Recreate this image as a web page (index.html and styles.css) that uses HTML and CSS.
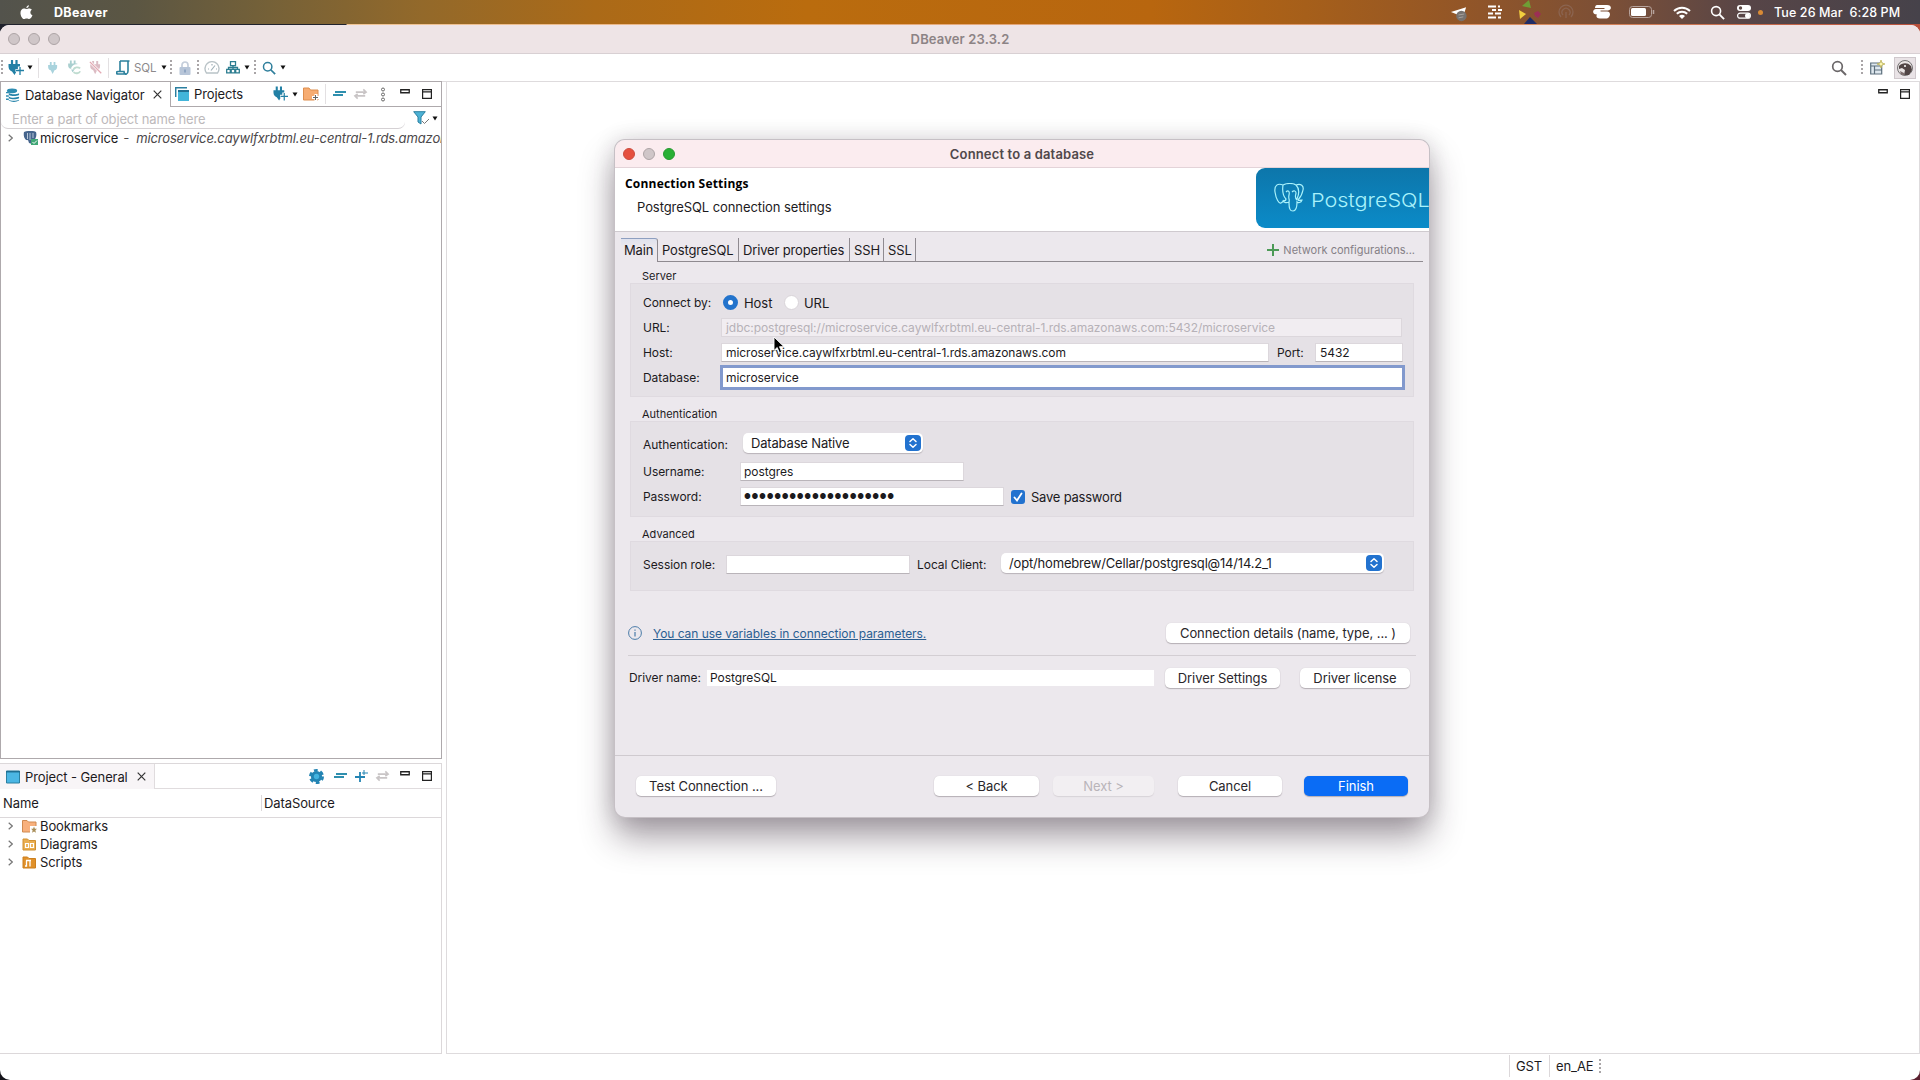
FILE: index.html
```html
<!DOCTYPE html>
<html lang="en">
<head>
    <meta charset="UTF-8" />
    <meta name="viewport" content="width=device-width, initial-scale=1" />
    <title>DBeaver 23.3.2</title>
    <link rel="stylesheet" href="styles.css">
</head>
<body>

<!-- shared icons -->
<svg class="defs" aria-hidden="true">
    <symbol id="plug" viewBox="0 0 16 16">
        <path d="M5 0v5M10 0v5" stroke="currentColor" stroke-width="2.400" fill="none"/>
        <path d="M1.500 4h12v2.500c0 2.500-1.500 4-3.500 4.500L7.500 16 5 11C3 10.500 1.500 9 1.500 6.500z" fill="currentColor"/>
    </symbol>
    <symbol id="plug-add" viewBox="0 0 16 16">
        <path d="M4 0v5M8.500 0v5" stroke="currentColor" stroke-width="2.200" fill="none"/>
        <path d="M.5 4h11.500v2.500c0 2.500-1.500 4.500-3.500 5L6.500 15 4 11.500C2 11 .5 9 .5 6.500z" fill="currentColor"/>
        <path d="M7.500 10.500h8.500M11.500 6.500v9" stroke="#fff" stroke-width="3.200"/>
        <path d="M8 10.500h8M12 7v8" stroke="currentColor" stroke-width="1.300"/>
    </symbol>
    <symbol id="caret" viewBox="0 0 6 5"><path d="M.5.500h5L3 4.500z" fill="#111"/></symbol>
    <symbol id="minus" viewBox="0 0 14 8">
        <path d="M3 2h11M1 5h10" stroke="#2f8fae" stroke-width="1.800"/>
    </symbol>
    <symbol id="sync" viewBox="0 0 16 12">
        <path d="M3 4h11M11 1l3 3-3 2M13 8H2M5 6L2 8l3 3" stroke="#c9c5c6" stroke-width="1.700" fill="none"/>
    </symbol>
    <symbol id="min" viewBox="0 0 10 5"><path d="M.75.75h8.500v3h-8.500z" fill="none" stroke="#222" stroke-width="1.300"/></symbol>
    <symbol id="max" viewBox="0 0 10 10"><path d="M.6.6h8.800v8.800H.6zM.6 2.800h8.800" fill="none" stroke="#222" stroke-width="1.200"/></symbol>
    <symbol id="close" viewBox="0 0 9 9"><path d="M.7.700l7.600 7.600M8.300.7L.7 8.300" stroke="#333" stroke-width="1.200"/></symbol>
    <symbol id="chev" viewBox="0 0 5 8"><path d="M.7.700L4.300 4 .7 7.300" fill="none" stroke="#777" stroke-width="1.200"/></symbol>
    <symbol id="updown" viewBox="0 0 16 16">
        <rect width="16" height="16" rx="4" fill="#2272cf"/>
        <path d="M5 6.500L8 3.700l3 2.800M5 9.500l3 2.800 3-2.800" fill="none" stroke="#fff" stroke-width="1.500" stroke-linecap="round" stroke-linejoin="round"/>
    </symbol>
    <symbol id="lens" viewBox="0 0 16 16">
        <circle cx="6.500" cy="6.500" r="4.800" fill="none" stroke="currentColor" stroke-width="1.700"/>
        <path d="M10 10l5 5" stroke="currentColor" stroke-width="2"/>
    </symbol>
</svg>

<!-- macOS menu bar -->
<header class="menubar">
    <svg class="apple" viewBox="0 0 14 16"><path d="M9.600.3c.1 1.500-1.300 3-2.700 3C6.700 1.800 8.200.4 9.600.3zM7.100 4.300c.7 0 1.500-.7 2.900-.7 1.200 0 2.200.6 2.800 1.500-2.400 1.500-2 4.900.6 5.900-.6 1.700-1.900 4-3.400 4-1.100 0-1.500-.6-2.800-.6S5.300 15 4.300 15C2.400 15 .5 11.500.5 8.500c0-3 1.800-4.800 3.800-4.800 1.300 0 2.100.6 2.800.6z" fill="#fff"/></svg>
    <b class="app-name">DBeaver</b>
    <div class="menu-icons">
        <svg class="mi-plane" viewBox="0 0 20 16"><path d="M1 6L17 1l-3 9-5-1z" fill="#fff"/><circle cx="12" cy="10" r="5.500" fill="#77726f"/><path d="M9 9l6-1M9 12l5-1" stroke="#a9a39f" /></svg>
        <svg class="mi-lines" viewBox="0 0 14 14"><path d="M0 1.500h8M4 5h4M10 5h4M0 8.500h5M7 8.500h6M0 12.500h8M10 1.500h2M10 12.500h3" stroke="#fff" stroke-width="2"/></svg>
        <svg class="mi-color" viewBox="0 0 22 24"><path d="M3 6L10 0l2 8z" fill="#6f9e35"/><path d="M0 10l7 4-6 5z" fill="#f3cf3e"/><path d="M5 24l6-7 7 7z" fill="#1f2c66"/><path d="M15 13l4-2 3 3-3 4-3-2z" fill="#9c2f55"/></svg>
        <svg class="mi-dim" viewBox="0 0 16 16"><path d="M3 13a7 7 0 1 1 10 0M5 11a4 4 0 1 1 6 0M8 8v6" fill="none" stroke="#8b6450" stroke-width="1.300"/></svg>
        <svg class="mi-swirl" viewBox="0 0 18 14"><path d="M4 0h10c5 0 5 5 1 5.500H8c-1 0-1 1 0 1h6c5 0 3 7-1 7H7c-4 0-4-3-3-4-5 0-5-5-1-5.500h8c1 0 1-1 0-1H2C2 1 3 0 4 0z" fill="#fff"/></svg>
        <svg class="mi-battery" viewBox="0 0 26 12"><rect x=".5" y=".5" width="22" height="11" rx="3" fill="none" stroke="#b7a39c"/><rect x="2" y="2" width="15" height="8" rx="1.500" fill="#fff"/><path d="M24.500 4v4" stroke="#b7a39c" stroke-width="1.500"/></svg>
        <svg class="mi-wifi" viewBox="0 0 18 13"><path d="M1 5a11.500 11.500 0 0 1 16 0M3.800 7.800a7.500 7.500 0 0 1 10.400 0" fill="none" stroke="#fff" stroke-width="2"/><path d="M6 10a4.500 4.500 0 0 1 6 0l-3 3z" fill="#fff"/></svg>
        <svg class="mi-search"><use href="#lens"/></svg>
        <svg class="mi-control" viewBox="0 0 14 14"><rect width="14" height="6" rx="3" fill="#fff"/><circle cx="3.500" cy="3" r="1.700" fill="#5c4844"/><rect x=".6" y="8.200" width="12.800" height="5" rx="2.500" fill="none" stroke="#fff" stroke-width="1.200"/><circle cx="10.500" cy="10.700" r="2.500" fill="#fff"/></svg>
        <i class="mi-dot"></i>
    </div>
    <span class="clock">Tue 26 Mar&nbsp; 6:28 PM</span>
</header>

<div class="window">
    <div class="titlebar">
        <div class="lights"><i></i><i></i><i></i></div>
        <b class="win-title">DBeaver 23.3.2</b>
    </div>

    <div class="toolbar">
        <i class="grip"></i>
        <svg class="tb-new"><use href="#plug-add"/></svg>
        <svg class="caret"><use href="#caret"/></svg>
        <i class="bar"></i>
        <svg class="tb-connect"><use href="#plug"/></svg>
        <svg class="tb-reconnect" viewBox="0 0 16 16"><use href="#plug" width="13" height="14"/><path d="M6.500 10a4 3 0 0 1 8-1M14.500 12a4 3 0 0 1-8 1" stroke="#fff" stroke-width="4" fill="none"/><path d="M7 10a4 3 0 0 1 7-1M14 12a4 3 0 0 1-7 1" stroke="#bfdcd0" stroke-width="2" fill="none"/></svg>
        <svg class="tb-disconnect" viewBox="0 0 16 16"><use href="#plug" width="15" height="15"/><path d="M1 1l13 13" stroke="#fff" stroke-width="3"/><path d="M1 1l13 13" stroke="#e3a9b3" stroke-width="1.500"/></svg>
        <i class="bar"></i>
        <svg class="tb-script" viewBox="0 0 14 15"><path d="M4 1h9.500M4 1v10.500M12 1v10c0 4-3 3-3 3H2c-2 0-2-2.500 0-2.500h6c0 2.500 1 2.500 2 2.500" fill="none" stroke="#2c819d" stroke-width="1.600"/></svg>
        <span class="sql">SQL</span>
        <svg class="caret"><use href="#caret"/></svg>
        <i class="grip grip-sql"></i>
        <svg class="tb-lock" viewBox="0 0 12 14"><path d="M3 7V4a3 3 0 0 1 6 0v3" fill="none" stroke="#c5cedb" stroke-width="1.700"/><rect x=".5" y="6" width="11" height="8" rx="1" fill="#b7c5d8"/><path d="M6 8.500v3" stroke="#8fa5c2" stroke-width="2"/></svg>
        <i class="grip grip-lock"></i>
        <svg class="tb-gauge" viewBox="0 0 16 13"><path d="M2.500 12a7 7 0 1 1 11 0z" fill="none" stroke="#b9c3c7" stroke-width="1.400"/><path d="M7 9.500l4-5M4 8h1M8 3v1.500M12 8h1" stroke="#9fb0b8" stroke-width="1.200"/></svg>
        <svg class="tb-dash" viewBox="0 0 14 13"><path d="M4.500.7h5v4h-5zM7 4.700v3M2.500 8V6.500h9V8M.7 8.300h3.600v3.500H.7zM5.200 8.300h3.600v3.500H5.200zM9.700 8.300h3.600v3.500H9.700z" fill="none" stroke="#2c7d90" stroke-width="1.300"/></svg>
        <svg class="caret"><use href="#caret"/></svg>
        <i class="grip grip-find"></i>
        <svg class="tb-find"><use href="#lens"/></svg>
        <svg class="caret"><use href="#caret"/></svg>

        <div class="tb-right">
            <svg class="tb-search"><use href="#lens"/></svg>
            <i class="grip"></i>
            <svg class="tb-persp" viewBox="0 0 15 15"><path d="M.7 3h11v11H.7zM.7 6h11M4.500 6v8M4.500 10h7" fill="#dfe8ef" stroke="#5d6f7d" stroke-width="1.200"/><path d="M11 0l1 3 3 1-3 1-1 3-1-3-3-1 3-1z" fill="#fbf6b0" stroke="#b6a94b" stroke-width=".7"/></svg>
            <span class="persp-on"><svg viewBox="0 0 16 16"><circle cx="8" cy="8" r="7.500" fill="#e9e4e4" stroke="#555" stroke-width=".8"/><path d="M2 6c3-3 8-4 12 0l1 4-3 5H7l1-5-3-2-3 1z" fill="#514545"/><path d="M3 11l4 2 1 2.500-4-1z" fill="#7b6c6c"/><circle cx="8" cy="6" r="1" fill="#fff"/></svg></span>
        </div>
    </div>

    <main class="workbench">
        <div class="side">
            <section class="navigator">
                <div class="tabs">
                    <div class="tab nav-tab">
                        <svg class="tab-icon" viewBox="0 0 15 15"><ellipse cx="6.500" cy="3" rx="5.500" ry="2.500" fill="#2f8db2"/><path d="M0 5h3M0 8.500h3M0 12h3" stroke="#2f8db2" stroke-width="1.500"/><path d="M3 5c2 2 8 2 11 .5v2C11 9 6 9 3 7.500zM3 9c2 2 8 1.500 11 .5v1.500c-3 1.500-8 1.500-11 0zM3 12.500c2 1.500 8 1.500 11 0v1c-3 2-8 2-11 0z" fill="#2583aa"/></svg>
                        <span>Database Navigator</span>
                        <svg class="x"><use href="#close"/></svg>
                    </div>
                    <div class="tab-rest">
                        <svg class="tab-icon" viewBox="0 0 14 14"><path d="M.7 10V.7H12" fill="none" stroke="#2b7fa0" stroke-width="1.500"/><path d="M3 3.500h11V14H3z" fill="#43b5da"/><path d="M3 4h11" stroke="#226f92" stroke-width="2"/></svg>
                        <span class="projects">Projects</span>
                        <div class="tools">
                            <svg class="t-plug"><use href="#plug-add"/></svg>
                            <svg class="caret"><use href="#caret"/></svg>
                            <svg class="t-folder" viewBox="0 0 17 14"><path d="M.5 13V1H6l1.500 2H15v10z" fill="#f6ac72" stroke="#dd8e4e"/><path d="M9 10.500h8M13 7v7" stroke="#fff" stroke-width="3"/><path d="M10 10.500h5M12.500 8v5" stroke="#666"/></svg>
                            <i class="bar"></i>
                            <svg class="t-minus"><use href="#minus"/></svg>
                            <svg class="t-sync"><use href="#sync"/></svg>
                            <svg class="t-dots" viewBox="0 0 6 15"><g fill="none" stroke="#666"><circle cx="3" cy="2.500" r="1.500"/><circle cx="3" cy="7.500" r="1.500"/><circle cx="3" cy="12.500" r="1.500"/></g></svg>
                            <svg class="t-min"><use href="#min"/></svg>
                            <svg class="t-max"><use href="#max"/></svg>
                        </div>
                    </div>
                </div>
                <div class="filter">
                    <div class="filter-input">Enter a part of object name here</div>
                    <svg class="funnel" viewBox="0 0 16 14"><path d="M.7.700h11.600L8 6v7L5 11V6z" fill="#4db2d5" stroke="#2b7fa0"/><path d="M9 10l2.500 2.500L16 8" fill="none" stroke="#777"/></svg>
                    <svg class="caret"><use href="#caret"/></svg>
                </div>
                <div class="tree-row conn">
                    <svg class="chev"><use href="#chev"/></svg>
                    <svg class="pg" viewBox="0 0 15 15"><path d="M1 1c4-1.500 9-1.500 12 0 1 3 0 7-2 8l-2 4-3-1-1-3C2 10 0 5 1 1z" fill="#46658d"/><path d="M4.500 2v6M7 2v7M10 2v5" stroke="#b9c8d8"/><path d="M8 8h7v6H8z" fill="#41a777"/><path d="M9.500 11l1.500 1.500 3-3" stroke="#fff" fill="none"/></svg>
                    <span class="conn-name">microservice</span>
                    <em>- &nbsp;microservice.caywlfxrbtml.eu-central-1.rds.amazon</em>
                </div>
            </section>

            <section class="project">
                <div class="tabs">
                    <div class="tab proj-tab">
                        <svg class="tab-icon" viewBox="0 0 14 13"><path d="M.5.500h13v12H.5z" fill="#4bb6e4" stroke="#2b7fa0"/><path d="M0 1.200h14" stroke="#1f6e92" stroke-width="1.500"/></svg>
                        <span>Project - General</span>
                        <svg class="x"><use href="#close"/></svg>
                    </div>
                    <div class="tab-rest">
                        <div class="tools">
                            <svg class="t-gear" viewBox="0 0 14 14"><circle cx="7" cy="7" r="5.800" fill="none" stroke="#2384b3" stroke-width="2.400" stroke-dasharray="3.500 2.570"/><circle cx="7" cy="7" r="5.200" fill="#2384b3"/><circle cx="7" cy="7" r="2.500" fill="#43b3df"/></svg>
                            <svg class="t-minus"><use href="#minus"/></svg>
                            <svg class="t-plus" viewBox="0 0 13 12"><path d="M0 7h10M5 2v10" stroke="#2384b3" stroke-width="1.800"/><path d="M7 3h6M9 0v5" stroke="#2384b3"/></svg>
                            <svg class="t-sync"><use href="#sync"/></svg>
                            <svg class="t-min"><use href="#min"/></svg>
                            <svg class="t-max"><use href="#max"/></svg>
                        </div>
                    </div>
                </div>
                <div class="cols"><span class="col-name">Name</span><span class="col-source">DataSource</span></div>
                <div class="tree-row">
                    <svg class="chev"><use href="#chev"/></svg>
                    <svg class="folder" viewBox="0 0 15 13"><path d="M.5 12V.5H5L6.500 2H14v10z" fill="#f8b07c" stroke="#d08a50"/><path d="M8 6h7v7H8z" fill="#fff"/><path d="M12 6.500l.9 2.200 2.100.1-1.600 1.500.5 2.400-1.900-1.200-1.900 1.200.5-2.400L9 8.800l2.100-.1z" fill="#a88d58"/></svg>
                    <span>Bookmarks</span>
                </div>
                <div class="tree-row">
                    <svg class="chev"><use href="#chev"/></svg>
                    <svg class="folder" viewBox="0 0 15 13"><path d="M1 12V1h4.500L7 2.500h6.500V12z" fill="#e9ae50" stroke="#d09031"/><path d="M3.500 5.500h3v4h-3zM8.500 5.500h3v4h-3z" fill="none" stroke="#fff" stroke-width="1.200"/></svg>
                    <span>Diagrams</span>
                </div>
                <div class="tree-row">
                    <svg class="chev"><use href="#chev"/></svg>
                    <svg class="folder" viewBox="0 0 15 13"><path d="M1 12V1h4.500L7 2.500h6.500V12z" fill="#e0912b" stroke="#cc7f1d"/><path d="M4 4.500h5M4.500 4.500v5.500H3M8 4.500v6" fill="none" stroke="#fff" stroke-width="1.300"/></svg>
                    <span>Scripts</span>
                </div>
            </section>
        </div>

        <section class="editor">
            <svg class="t-min"><use href="#min"/></svg>
            <svg class="t-max"><use href="#max"/></svg>
        </section>
    </main>

    <footer class="status">
        <span class="tz">GST</span>
        <span class="locale">en_AE</span>
        <i class="grip"></i>
    </footer>
</div>

<!-- connection dialog -->
<div class="dialog">
    <div class="dlg-title">
        <div class="lights"><i class="red"></i><i></i><i class="green"></i></div>
        <b>Connect to a database</b>
    </div>

    <div class="dlg-head">
        <div class="head-text">
            <h1>Connection Settings</h1>
            <p>PostgreSQL connection settings</p>
        </div>
        <div class="banner">
            <svg class="elephant" viewBox="0 0 30 30"><path d="M9 2C4 0 0 2 1 9c1 7 4 12 6 11 2-1 3-3 3-3M9 2c4-2 10-2 13 0 5-2 8 1 7 5-1 5-3 8-5 10 1 1 3 0 4 0-1 3-4 3-5 2 0 5-1 9-4 9s-4-2-4-9c-2 1-5 1-6-1 2 0 3-1 3-2-3-3-4-7-3-14zM22 2c3 3 4 7 1 14M12 9c2-2 4-1 3 3s1 4 0 7M18 9c2-2 4-1 4 1s-2 4 1 7" fill="none" stroke="#a9f2fb" stroke-width="1.200"/></svg>
            <span>PostgreSQL</span>
        </div>
    </div>

    <div class="dlg-tabs">
        <span class="dt on">Main</span>
        <span class="dt w-pg">PostgreSQL</span>
        <span class="dt w-dp">Driver properties</span>
        <span class="dt w-ssh">SSH</span>
        <span class="dt w-ssl">SSL</span>
        <span class="net"><svg viewBox="0 0 12 12"><path d="M0 6h12M6 0v12" stroke="#4c9a57" stroke-width="2"/></svg><span>Network configurations...</span></span>
    </div>

    <div class="dlg-body">
        <h2>Server</h2>
        <div class="group server">
            <div class="row">
                <label>Connect by:</label>
                <i class="radio on"></i><span class="r-host">Host</span>
                <i class="radio"></i><span class="r-url">URL</span>
            </div>
            <div class="row">
                <label>URL:</label>
                <div class="input disabled">jdbc:postgresql://microservice.caywlfxrbtml.eu-central-1.rds.amazonaws.com:5432/microservice</div>
            </div>
            <div class="row">
                <label>Host:</label>
                <div class="input host">microservice.caywlfxrbtml.eu-central-1.rds.amazonaws.com</div>
                <label class="port-label">Port:</label>
                <div class="input port">5432</div>
            </div>
            <div class="row">
                <label>Database:</label>
                <div class="input focus">microservice</div>
            </div>
        </div>

        <h2>Authentication</h2>
        <div class="group auth">
            <div class="row auth-row">
                <label>Authentication:</label>
                <div class="select native">Database Native<svg><use href="#updown"/></svg></div>
            </div>
            <div class="row">
                <label>Username:</label>
                <div class="input user">postgres</div>
            </div>
            <div class="row">
                <label>Password:</label>
                <div class="input pass">●●●●●●●●●●●●●●●●●●●●</div>
                <svg class="check" viewBox="0 0 14 14"><rect width="14" height="14" rx="3" fill="#2272cf"/><path d="M3.500 7.500l2.500 3 4.500-7" fill="none" stroke="#fff" stroke-width="1.800" stroke-linecap="round"/></svg>
                <span class="save">Save password</span>
            </div>
        </div>

        <h2>Advanced</h2>
        <div class="group adv">
            <div class="row">
                <label>Session role:</label>
                <div class="input role"></div>
                <label class="client-label">Local Client:</label>
                <div class="select client">/opt/homebrew/Cellar/postgresql@14/14.2_1<svg><use href="#updown"/></svg></div>
            </div>
        </div>

        <div class="hint">
            <svg viewBox="0 0 14 14"><circle cx="7" cy="7" r="6.400" fill="none" stroke="#4a7ba8"/><path d="M7 6v4.500M7 3.500v1.300" stroke="#4a7ba8" stroke-width="1.200"/></svg>
            <a>You can use variables in connection parameters.</a>
            <button class="b-details">Connection details (name, type, ... )</button>
        </div>
        <div class="driver">
            <label>Driver name:</label>
            <div class="driver-name">PostgreSQL</div>
            <button class="b-settings">Driver Settings</button>
            <button class="b-license">Driver license</button>
        </div>
    </div>

    <div class="dlg-foot">
        <button class="b-test">Test Connection ...</button>
        <button class="b-back">&lt; Back</button>
        <button class="b-next" disabled>Next &gt;</button>
        <button class="b-cancel">Cancel</button>
        <button class="b-finish">Finish</button>
    </div>
</div>

<svg class="cursor" viewBox="0 0 12 18"><path d="M1 1v13.500l3.200-3 2.300 5.500 2.300-1-2.300-5.300H11z" fill="#000" stroke="#fff" stroke-width=".9"/></svg>

</body>
</html>
```
FILE: styles.css
```css
* {
    box-sizing: border-box;
}
body {
    margin: 0;
    width: 1920px;
    height: 1080px;
    overflow: hidden;
    position: relative;
    background:
        linear-gradient(90deg, #14131a 50%, #5c2030 50%) 0 100% / 100% 500px no-repeat,
        linear-gradient(90deg, #20222c 0%, #20222c 18%, #f0c596 18.100%, #d98d60 80%, #b8503c 100%);
    font-family: Inter, "Liberation Sans", sans-serif;
    font-size: 13px;
    letter-spacing: -.1px;
    color: #1c1a1d;
    display: flex;
    flex-direction: column;
}
svg {
    display: block;
    flex: none;
}
h1, h2, p {
    margin: 0;
}
span, label, b, em, a {
    white-space: nowrap;
}
.defs {
    position: absolute;
    width: 0;
    height: 0;
}

/* menu bar */
.menubar {
    height: 24px;
    flex: none;
    display: flex;
    align-items: center;
    color: #fff;
    background: linear-gradient(90deg, #53534c 0%, #5b5643 7%, #756138 14%, #93692a 22%, #ab6a18 31%, #ba6c0e 42%, #b8660f 60%, #a65f1a 68%, #935627 76%, #7b4f37 84%, #574547 91%, #46424a 100%);
}
.apple {
    width: 13px;
    height: 15px;
    margin-left: 20px;
}
.app-name {
    margin-left: 21px;
    font-size: 12.500px;
    letter-spacing: .3px;
}
.menu-icons {
    margin-left: auto;
    display: flex;
    align-items: center;
}
.mi-plane { width: 19px; height: 16px; margin-top: 4px; }
.mi-lines { width: 14px; height: 14px; margin-left: 19px; }
.mi-color { width: 22px; height: 24px; margin-left: 17px; }
.mi-dim { width: 16px; height: 16px; margin-left: 17px; }
.mi-swirl { width: 18px; height: 14px; margin-left: 19px; }
.mi-battery { width: 26px; height: 12px; margin-left: 18px; }
.mi-wifi { width: 18px; height: 13px; margin-left: 18px; }
.mi-search { width: 15px; height: 15px; margin-left: 19px; }
.mi-control { width: 14px; height: 14px; margin-left: 12px; }
.mi-dot {
    width: 5px;
    height: 5px;
    margin-left: 7px;
    border-radius: 50%;
    background: #d98a35;
}
.clock {
    margin: 0 19px 0 11px;
    width: 127px;
    font-size: 12.500px;
    font-weight: 500;
    letter-spacing: .1px;
}

/* main window */
.window {
    flex: 1;
    margin-top: 1px;
    display: flex;
    flex-direction: column;
    border-radius: 9px 9px 10px 10px;
    overflow: hidden;
    background: #fff;
}
.titlebar {
    position: relative;
    height: 29px;
    flex: none;
    display: flex;
    align-items: center;
    justify-content: center;
    background: #eee4e6;
    border-bottom: 1px solid #d8d0d3;
}
.lights {
    position: absolute;
    left: 8px;
    display: flex;
    gap: 8px;
}
.lights i {
    width: 12px;
    height: 12px;
    border-radius: 50%;
    background: #cfc6c8;
    border: 1px solid #ada4a6;
}
.lights .red {
    background: #e5503f;
    border-color: #cb4c3f;
}
.lights .green {
    background: #29b035;
    border-color: #279a31;
}
.win-title {
    padding-bottom: 1px;
    color: #8c8385;
    font-size: 13px;
    font-weight: 600;
    letter-spacing: .15px;
}
.toolbar {
    height: 28px;
    flex: none;
    display: flex;
    align-items: center;
    padding-left: 1px;
    border-bottom: 1px solid #dedbdd;
}
.grip {
    width: 2px;
    height: 15px;
    flex: none;
    background: repeating-linear-gradient(#a9a5a7 0 2px, #fff 2px 4px);
}
.bar {
    width: 1px;
    height: 20px;
    flex: none;
    background: #e3e0e2;
}
.caret {
    width: 6px;
    height: 5px;
}
.tb-new { width: 16px; height: 16px; margin: 0 3px 0 5px; color: #2280a5; }
.toolbar > .bar { margin-left: 5px; }
.tb-connect { width: 12px; height: 14px; margin-left: 8px; color: #a9d3dd; }
.tb-reconnect { width: 15px; height: 15px; margin-left: 8px; color: #a9cfcf; }
.tb-disconnect { width: 14px; height: 14px; margin-left: 7px; color: #dcbcc4; }
.tb-script { width: 14px; height: 15px; margin-left: 7px; }
.sql { width: 21px; margin: 0 6px 0 4px; font-size: 11.500px; color: #8c898b; }
.grip-sql { margin-left: 3px; }
.tb-lock { width: 12px; height: 14px; margin-left: 7px; }
.grip-lock { margin-left: 6px; }
.tb-gauge { width: 16px; height: 13px; margin-left: 5px; }
.tb-dash { width: 14px; height: 13px; margin: 0 4px 0 6px; }
.grip-find { margin-left: 4px; }
.tb-find { width: 14px; height: 14px; margin: 0 4px 0 6px; color: #2f7f9c; }
.tb-right {
    margin-left: auto;
    display: flex;
    align-items: center;
    padding-right: 4px;
}
.tb-search { width: 16px; height: 16px; margin-right: 14px; color: #6b6769; }
.tb-persp { width: 15px; height: 15px; margin: 0 9px 0 7px; }
.persp-on {
    width: 22px;
    height: 22px;
    padding: 2px;
    background: #e9e3e6;
    border: 1px solid #cfc8cc;
}
.persp-on svg { width: 16px; height: 16px; }

/* workbench */
.workbench {
    flex: 1;
    display: flex;
    min-height: 0;
}
.side {
    width: 442px;
    flex: none;
    display: flex;
    flex-direction: column;
}
.navigator {
    height: 678px;
    margin-top: -1px;
    border: 1px solid #aea9ac;
}
.tabs {
    display: flex;
    height: 25px;
}
.tab, .tab-rest {
    display: flex;
    align-items: center;
}
.tab {
    padding-left: 5px;
}
.tab-icon {
    width: 14px;
    height: 14px;
    margin-right: 5px;
}
.x {
    width: 9px;
    height: 9px;
    margin-left: auto;
}
.nav-tab {
    width: 170px;
    padding-right: 8px;
    border-right: 1px solid #aea9ac;
}
.tab-rest {
    flex: 1;
    padding-left: 4px;
    border-bottom: 1px solid #aea9ac;
}
.tools {
    margin-left: auto;
    display: flex;
    align-items: center;
    padding-right: 9px;
}
.t-plug { width: 15px; height: 16px; margin-right: 4px; color: #2280a5; }
.t-folder { width: 17px; height: 14px; margin: 0 5px; }
.t-minus { width: 14px; height: 8px; margin-left: 6px; }
.t-sync { width: 15px; height: 12px; margin-left: 7px; }
.t-dots { width: 6px; height: 15px; margin-left: 12px; }
.t-min { width: 10px; height: 5px; margin: 0 12px 5px 14px; }
.t-max { width: 10px; height: 10px; }
.t-gear { width: 15px; height: 15px; margin-right: 3px; }
.t-plus { width: 13px; height: 12px; margin-left: 8px; }
.filter {
    display: flex;
    align-items: center;
    height: 22px;
}
.filter-input {
    width: 404px;
    height: 21px;
    padding-left: 11px;
    line-height: 22px;
    color: #bdb9bb;
    border-bottom: 1px solid #d5d1d4;
    border-radius: 0 0 7px 7px;
    letter-spacing: -.15px;
}
.funnel { width: 16px; height: 14px; margin: 0 3px 0 8px; }
.tree-row {
    display: flex;
    align-items: center;
    height: 18px;
    padding-left: 8px;
    overflow: hidden;
}
.conn {
    padding-left: 7px;
}
.chev { width: 5px; height: 8px; margin-right: 10px; }
.pg { width: 15px; height: 15px; margin-right: 2px; }
.conn em {
    margin-left: 5px;
    color: #4b484a;
    letter-spacing: -.14px;
}
.project {
    margin-top: 4px;
    flex: 1;
    border: 1px solid #dcd8da;
    border-left: 0;
}
.proj-tab {
    width: 155px;
    padding: 0 8px 0 6px;
    background: #f8f5f7;
    border-right: 1px solid #e0dcde;
}
.project .tab-rest {
    border-color: #e0dcde;
}
.project .t-sync { margin-left: 7px; }
.project .t-min { margin-left: 10px; }
.cols {
    display: flex;
    align-items: center;
    height: 29px;
    margin-bottom: -1px;
    border-bottom: 1px solid #dcd8da;
}
.col-name {
    width: 261px;
    padding-left: 3px;
}
.col-source {
    padding-left: 2px;
    border-left: 1px solid #dcd8da;
}
.folder { width: 15px; height: 13px; margin: 0 3px 0 -1px; }
.editor {
    flex: 1;
    margin-left: 4px;
    padding: 7px 9px 0 0;
    display: flex;
    justify-content: flex-end;
    border: 1px solid #dedbdd;
    border-top: 0;
}
.status {
    height: 26px;
    flex: none;
    display: flex;
    align-items: center;
    padding: 0 0 2px 1509px;
}
.tz, .locale {
    border-left: 1px solid #dcd8da;
    padding: 3px 7px 3px 6px;
}
.tz { width: 40px; }
.locale { width: 50px; }

/* dialog */
.dialog {
    position: absolute;
    left: 615px;
    top: 140px;
    width: 814px;
    height: 677px;
    display: flex;
    flex-direction: column;
    border-radius: 10px;
    overflow: hidden;
    background: #ece8ed;
    box-shadow: 0 0 0 1px #c6c0c5, 0 20px 34px rgba(40, 25, 40, .42), 0 0 22px rgba(40, 25, 40, .16);
    font-size: 12px;
    letter-spacing: -.05px;
}
.dlg-title {
    position: relative;
    height: 28px;
    flex: none;
    display: flex;
    align-items: center;
    justify-content: center;
    background: #fbecef;
    border-bottom: 1px solid #e3d3d8;
    color: #50484b;
}
.dlg-title b {
    font-size: 13px;
    font-weight: 600;
    letter-spacing: .15px;
}
.dlg-head {
    height: 64px;
    flex: none;
    display: flex;
    justify-content: space-between;
    background: #fff;
    border-bottom: 1px solid #cfcacf;
}
.head-text {
    padding: 7px 0 0 10px;
}
.head-text h1 {
    font: 700 12px/18px "Open Sans", sans-serif;
    letter-spacing: .2px;
    color: #000;
}
.head-text p {
    margin: 6px 0 0 12px;
    line-height: 16px;
    font-size: 13px;
    letter-spacing: -.08px;
}
.banner {
    width: 173px;
    height: 60px;
    padding-left: 18px;
    display: flex;
    align-items: center;
    overflow: hidden;
    border-radius: 9px 0 0 9px;
    background: linear-gradient(#0d76aa, #0b8bc8);
    color: #a9f2fb;
}
.elephant { width: 30px; height: 30px; }
.banner span {
    margin: 4px 0 0 7px;
    font-size: 19px;
    font-weight: 300;
    transform: scaleX(1.14);
    transform-origin: left;
}
.dlg-tabs {
    display: flex;
    height: 30px;
    flex: none;
    padding: 6px 4px 0 6px;
    font-size: 13px;
    letter-spacing: -.15px;
    background: linear-gradient(#8f8a90, #8f8a90) 42px 29px / 766px 1px no-repeat;
}
.dt {
    height: 24px;
    padding-left: 4px;
    line-height: 25px;
    border-right: 1px solid #8f8a90;
}
.dt.on {
    width: 37px;
    padding-left: 3px;
    line-height: 23px;
    border-top: 1px solid #8e9fc0;
    border-radius: 0 3px 0 0;
    background: linear-gradient(#dfe2ee, #ece8ed 8px);
}
.w-pg { width: 81px; }
.w-dp { width: 111px; }
.w-ssh { width: 34px; }
.w-ssl { width: 32px; }
.net {
    margin-left: auto;
    display: flex;
    align-items: center;
    padding-right: 10px;
    color: #858086;
    font-size: 11px;
    letter-spacing: 0;
    height: 24px;
}
.net svg { width: 12px; height: 12px; margin-right: 4px; }
.dlg-body {
    flex: 1;
    padding: 0 15px;
    display: flex;
    flex-direction: column;
}
.dlg-body h2 {
    height: 15px;
    margin: 6px 0 0 12px;
    font-size: 11px;
    font-weight: 400;
    line-height: 16px;
    letter-spacing: 0;
    flex: none;
}
.group {
    flex: none;
    background: #e5e1e6;
    border: 1px solid #dfdae0;
    padding-left: 12px;
}
.server { height: 114px; padding-top: 6px; }
.server + h2 { margin-top: 9px; }
.auth { height: 96px; padding-top: 8px; }
.auth + h2 { margin-top: 9px; }
.adv { height: 50px; padding-top: 10px; }
.row {
    display: flex;
    align-items: center;
    height: 25px;
}
.server label:first-child { width: 78px; }
.auth label { width: 97px; }
.adv label:first-child { width: 83px; }
.input {
    height: 19px;
    padding-left: 4px;
    line-height: 18px;
    white-space: nowrap;
    overflow: hidden;
    background: #fff;
    border: 1px solid #dcd7dc;
    border-bottom-color: #b9b4b9;
}
.disabled {
    width: 681px;
    background: #f1edf1;
    color: #b6b1b7;
    border-bottom-color: #dcd7dc;
}
.host { width: 548px; }
.server .port-label { width: 38px; margin-left: 8px; }
.port { width: 88px; }
.focus {
    width: 679px;
    margin-left: 2px;
    padding-left: 3px;
    border: 0;
    line-height: 19px;
    box-shadow: 0 0 0 3px #8299cd;
}
.radio {
    width: 15px;
    height: 15px;
    border-radius: 50%;
    background: #fff;
    border: 1px solid #d9d4d9;
}
.radio.on {
    background: #fff;
    border: 5px solid #2373cc;
    margin-left: 2px;
}
.r-host { width: 40px; margin-left: 6px; font-size: 13px; }
.r-url { margin-left: 5px; font-size: 13px; }
.select {
    display: flex;
    align-items: center;
    justify-content: space-between;
    height: 20px;
    padding: 0 2px 0 8px;
    background: #fff;
    border-radius: 5px;
    box-shadow: 0 1px 1px #b9b3b9;
    font-size: 13px;
    letter-spacing: -.17px;
    white-space: nowrap;
}
.select svg { width: 16px; height: 16px; }
.auth-row { height: 28px; margin-bottom: 1px; align-items: flex-start; padding-top: 3px; }
.auth-row label { padding-top: 4px; }
.native { width: 180px; margin-left: 3px; }
.user, .pass { padding-left: 3px; }
.user { width: 224px; }
.pass {
    width: 264px;
    font-size: 7.500px;
    letter-spacing: .69px;
}
.check { width: 14px; height: 14px; margin: 0 6px 0 7px; }
.save { font-size: 13px; letter-spacing: -.22px; }
.role { width: 184px; }
.client-label { width: 84px; margin-left: 7px; }
.client { width: 383px; margin-bottom: 4px; }
button {
    height: 20px;
    padding: 0;
    border: 0;
    border-radius: 5px;
    background: #fff;
    box-shadow: 0 1px 1px #b5afb5, 0 0 1px #c9c4c9;
    font-family: inherit;
    font-size: 13px;
    letter-spacing: -.07px;
    color: #29262a;
}
.hint {
    display: flex;
    align-items: center;
    margin: 28px -2px 0 -2px;
    padding-bottom: 8px;
    height: 37px;
    border-bottom: 1px solid #d3ced3;
}
.hint svg { width: 14px; height: 14px; margin-right: 11px; }
.hint a {
    color: #2b5f92;
    text-decoration: underline;
}
.b-details { width: 244px; margin: 0 6px 0 auto; }
.driver {
    display: flex;
    align-items: center;
    height: 43px;
    margin-left: -1px;
}
.driver label { width: 78px; }
.driver-name {
    width: 447px;
    height: 16px;
    padding-left: 3px;
    line-height: 16px;
    background: #fff;
}
.b-settings { width: 115px; margin-left: 11px; }
.b-license { width: 110px; margin-left: 20px; }
.dlg-foot {
    height: 62px;
    flex: none;
    display: flex;
    padding: 20px 0 0 21px;
    border-top: 1px solid #cfcacf;
}
.b-test { width: 140px; }
.b-back { width: 105px; margin-left: 158px; }
.b-next { width: 101px; margin-left: 14px; }
.b-next:disabled { background: #f2eff2; color: #b9b4b9; box-shadow: 0 1px 1px #d8d3d8; }
.b-cancel { width: 104px; margin-left: 24px; }
.b-finish {
    width: 104px;
    margin-left: 22px;
    background: #0a6cf5;
    color: #fff;
}
.cursor {
    position: absolute;
    left: 773px;
    top: 336px;
    width: 12px;
    height: 18px;
}
```
